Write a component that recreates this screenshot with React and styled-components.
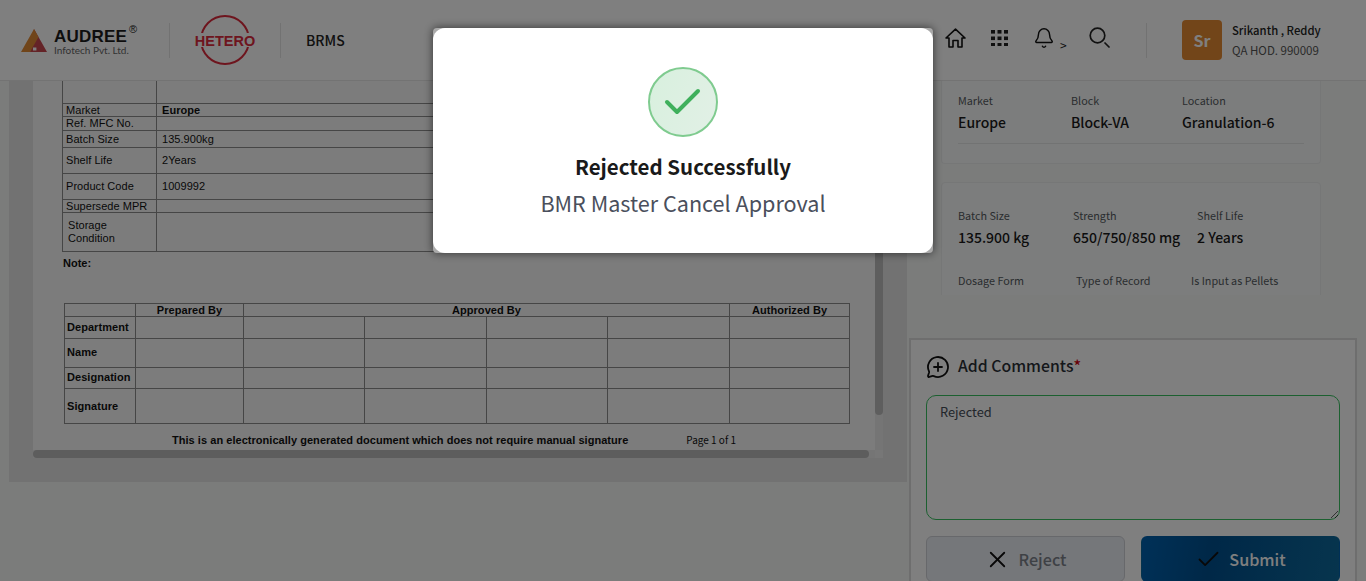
import React from 'react';
import styled, { createGlobalStyle } from 'styled-components';
import { Bell, Check, MessageCirclePlus, X } from 'lucide-react';

const UI_FONT = '"Noto Sans CJK SC", "Noto Sans", sans-serif';
const DOC_FONT = '"Liberation Sans", Arial, sans-serif';

const GlobalStyle = createGlobalStyle`
  html, body {
    margin: 0;
    height: 100%;
    overflow: hidden;
    background: #f6f8f7;
    font-family: ${UI_FONT};
  }
  * { box-sizing: border-box; }
`;

const Page = styled.div`
  width: 1366px;
  height: 581px;
  overflow: hidden;
`;

/* header */
const Header = styled.header`
  height: 81px;
  display: flex;
  align-items: center;
  background: #fff;
  border-bottom: 1px solid #e6e6e6;
`;

const LogoBlock = styled.div`
  display: flex;
  align-items: center;
  gap: 7px;
  width: 148px;
  margin-left: 21px;
`;

const LogoText = styled.div`
  display: flex;
  flex-direction: column;
  width: 90px;
`;

const LogoName = styled.div`
  font: bold 17px/16px ${DOC_FONT};
  letter-spacing: 0.2px;
  color: #1c1c1c;
  white-space: nowrap;
  sup {
    font: 400 11px/11px ${DOC_FONT};
    vertical-align: 9px;
    margin-left: 2px;
  }
`;

const LogoSub = styled.div`
  font: 400 10px/11px Lato, sans-serif;
  color: #666;
  white-space: nowrap;
`;

const Divider = styled.div`
  width: 1px;
  height: 35px;
  background: #e4e4e4;
`;

const HeteroWrap = styled.div`
  width: 110px;
  display: flex;
  justify-content: center;
  svg { display: block; }
`;

const AppName = styled.div`
  margin-left: 25px;
  font: 500 14px/20px ${UI_FONT};
  color: #222;
`;

const HeaderRight = styled.div`
  margin-left: auto;
  display: flex;
  align-items: center;
  height: 100%;
`;

const IconSlot = styled.div`
  display: flex;
  align-items: center;
  color: #111;
  width: ${(p) => p.$w}px;
  margin-top: ${(p) => p.$mt ?? -4}px;
`;

const Chevron = styled.span`
  font: 400 12px/12px ${UI_FONT};
  color: #222;
  margin: 14px 0 0 5px;
`;

const Avatar = styled.div`
  width: 40px;
  height: 40px;
  margin: 0 10px 0 35px;
  display: flex;
  align-items: center;
  justify-content: center;
  border-radius: 4px;
  background: #e58a33;
  color: #fff;
  font: 700 16px/20px ${UI_FONT};
`;

const UserInfo = styled.div`
  width: 134px;
  display: flex;
  flex-direction: column;
  gap: 4px;
`;

const UserName = styled.div`
  font: 500 11.3px/16px ${UI_FONT};
  color: #222;
`;

const UserRole = styled.div`
  font: 400 11.5px/16px ${UI_FONT};
  color: #555;
`;

/* body */
const Body = styled.main`
  display: flex;
  gap: 2px;
  padding-left: 9px;
`;

const DocFrame = styled.section`
  width: 898px;
  height: 401px;
  padding: 0 24px 24px;
  background: #e4e4e4;
`;

const Scroller = styled.div`
  display: grid;
  grid-template-columns: 842px 8px;
  grid-template-rows: 369px 8px;
`;

const Doc = styled.div`
  overflow: hidden;
  background: #f9f9f9;
  padding-left: 29px;
  font-family: ${DOC_FONT};
  color: #111;
`;

const Track = styled.div`
  background: #eaeaea;
`;

const VThumb = styled.div`
  width: 8px;
  height: 334px;
  border-radius: 0 0 4px 4px;
  background: #bdbdbd;
`;

const HThumb = styled.div`
  width: 836px;
  height: 8px;
  border-radius: 4px;
  background: #bababa;
`;

const Corner = styled.div`
  background: #efefef;
`;

const Table = styled.table`
  border-collapse: collapse;
  table-layout: fixed;
  width: ${(p) => p.$w}px;
  margin-left: ${(p) => p.$ml || 0}px;
  margin-top: ${(p) => p.$mt || 0}px;
  font-size: 11px;
  line-height: 12px;
`;

const Row = styled.tr`
  height: ${(p) => p.$h}px;
`;

const Cell = styled.td`
  border: 1px solid #8c8c8c;
  padding: 0 0 ${(p) => p.$pb || 0}px ${(p) => (p.$center ? 0 : p.$pl ?? 3)}px;
  font-weight: ${(p) => (p.$bold ? 700 : 400)};
  letter-spacing: 0.05px;
  line-height: ${(p) => (p.$wrap ? 13 : 12)}px;
  text-align: ${(p) => (p.$center ? 'center' : 'left')};
  white-space: ${(p) => (p.$wrap ? 'normal' : 'nowrap')};
`;

const TopCell = styled(Cell)`
  border-top: none;
`;

const Note = styled.div`
  margin: 5px 0 0 1px;
  height: 12px;
  font-size: 11px;
  line-height: 12px;
  font-weight: 700;
`;

const DocFooter = styled.div`
  display: flex;
  align-items: center;
  margin: 9px 0 0 110px;
  height: 14px;
`;

const FooterText = styled.span`
  font-size: 11px;
  font-weight: 700;
  letter-spacing: 0.04px;
  white-space: nowrap;
`;

const PageNo = styled.span`
  margin-left: 58px;
  font: 400 10px/12px ${UI_FONT};
  white-space: nowrap;
`;

/* right column */
const RightCol = styled.aside`
  width: 448px;
  display: flex;
  flex-direction: column;
`;

const InfoArea = styled.div`
  height: 214px;
  overflow: hidden;
  padding: 0 36px 0 32px;
  display: flex;
  flex-direction: column;
  gap: 18px;
`;

const InfoCard = styled.div`
  flex: none;
  width: 380px;
  height: ${(p) => p.$h}px;
  background: #f9fafa;
  border: 1px solid #eceeee;
  border-radius: 4px;
  padding: ${(p) => p.$pad};
  ${(p) => p.$clipTop && 'border-top: none; border-radius: 0 0 4px 4px;'}
`;

const InfoRow = styled.div`
  display: flex;
  margin-top: ${(p) => p.$mt || 0}px;
`;

const InfoItem = styled.div`
  width: ${(p) => p.$w}px;
  flex: none;
`;

const InfoLabel = styled.div`
  font: 400 10.8px/16px ${UI_FONT};
  color: #555b60;
  white-space: nowrap;
`;

const InfoValue = styled.div`
  margin-top: 3px;
  font: 500 14px/22px ${UI_FONT};
  color: #1b1b1b;
  white-space: nowrap;
`;

const InfoRule = styled.div`
  height: 1px;
  margin-top: 10px;
  background: #e4e6e6;
`;

const Panel = styled.section`
  margin-top: 43px;
  width: 448px;
  height: 260px;
  padding: 13px 15px 0;
  background: #fff;
  border: 2px solid #dcdcdc;
  border-bottom: none;
`;

const PanelTitle = styled.div`
  display: flex;
  align-items: center;
  gap: 8px;
  height: 25px;
  font: 500 15.8px/24px ${UI_FONT};
  color: #2a2f36;
  svg { color: #111; margin-top: 2px; }
`;

const Required = styled.span`
  color: #d0000f;
  margin-left: -8px;
`;

const CommentBox = styled.textarea`
  display: block;
  width: 414px;
  height: 125px;
  margin-top: 17px;
  padding: 6px 13px;
  border: 1px solid #38c060;
  border-radius: 10px;
  outline: none;
  background: #fff;
  font: 400 12.8px/20px ${UI_FONT};
  color: #444c56;
`;

const ButtonRow = styled.div`
  display: flex;
  gap: 16px;
  margin-top: 16px;
`;

const ActionButton = styled.button`
  width: 199px;
  height: 46px;
  display: flex;
  align-items: center;
  justify-content: center;
  gap: 7px;
  border-radius: 6px;
  font: 500 16.2px/24px ${UI_FONT};
  color: ${(p) => (p.$primary ? '#fff' : '#7d828b')};
  border: 1px solid ${(p) => (p.$primary ? 'transparent' : '#cfd1d6')};
  background: ${(p) =>
    p.$primary
      ? 'linear-gradient(100deg, #0062b0 0%, #00508f 35%, #0e6a9c 100%)'
      : '#ebeef5'};
  svg { color: #111; }
`;

/* modal */
const Overlay = styled.div`
  position: fixed;
  inset: 0;
  display: flex;
  justify-content: center;
  align-items: flex-start;
  padding-top: 28px;
  background: rgba(0, 0, 0, 0.5);
`;

const ModalShell = styled.div`
  width: 500px;
  height: 225px;
  background: #aaa;
  border-radius: 4px;
  box-shadow: 0 0 10px rgba(0, 0, 0, 0.6);
`;

const Modal = styled.div`
  height: 100%;
  padding-top: 39px;
  display: flex;
  flex-direction: column;
  align-items: center;
  background: #fff;
  border-radius: 12px;
`;

const SuccessCircle = styled.div`
  width: 70px;
  height: 70px;
  display: flex;
  align-items: center;
  justify-content: center;
  border-radius: 50%;
  border: 2px solid #7fcb8f;
  background: linear-gradient(110deg, #d8f0de, #e2f0e6);
`;

const ModalTitle = styled.div`
  margin-top: 13px;
  font: 700 20.5px/32px ${UI_FONT};
  color: #1a1a1a;
`;

const ModalText = styled.div`
  margin-top: 5px;
  font: 400 21.6px/32px ${UI_FONT};
  color: #4a4f5c;
`;

const topRows = [
  { h: 22, label: '', value: '' },
  { h: 13, label: 'Market', value: 'Europe', bold: true },
  { h: 14, label: 'Ref. MFC No.', value: '' },
  { h: 17, label: 'Batch Size', value: '135.900kg' },
  { h: 26, label: 'Shelf Life', value: '2Years' },
  { h: 26, label: 'Product Code', value: '1009992' },
  { h: 13, label: 'Supersede MPR', value: '' },
  { h: 39, label: 'Storage Condition', value: '', wrap: true },
];

const signRows = [
  { h: 22, label: 'Department' },
  { h: 29, label: 'Name', pb: 2 },
  { h: 21, label: 'Designation', pb: 2 },
  { h: 35, label: 'Signature' },
];

const lotInfo = [
  { w: 113, label: 'Market', value: 'Europe' },
  { w: 111, label: 'Block', value: 'Block-VA' },
  { w: 120, label: 'Location', value: 'Granulation-6' },
];

const batchInfo = [
  { w: 115, label: 'Batch Size', value: '135.900 kg' },
  { w: 124, label: 'Strength', value: '650/750/850 mg' },
  { w: 100, label: 'Shelf Life', value: '2 Years' },
];

const formInfo = [
  { w: 118, label: 'Dosage Form' },
  { w: 115, label: 'Type of Record' },
  { w: 120, label: 'Is Input as Pellets' },
];

const AudreeMark = () => (
  <svg width="26" height="23" viewBox="0 0 26 23">
    <path d="M13 0 L26 23 H9 Z" fill="#c9464e" />
    <path d="M0 23 L13 0 L17.5 8 L9 23 Z" fill="#e08a35" />
    <rect x="12" y="18.5" width="3.4" height="3" fill="#fff" />
  </svg>
);

const HeteroMark = () => (
  <svg width="64" height="52" viewBox="0 0 64 52">
    <circle cx="32" cy="26" r="24" fill="none" stroke="#dc2a3c" strokeWidth="2" />
    <rect x="0" y="19" width="64" height="14" fill="#fff" />
    <text
      x="32"
      y="31.5"
      textAnchor="middle"
      fontFamily={DOC_FONT}
      fontWeight="700"
      fontSize="14.5"
      fill="#dc2a3c"
    >
      HETERO
    </text>
  </svg>
);

const HomeIcon = () => (
  <svg width="21" height="20" viewBox="0 0 21 20" fill="none" stroke="currentColor" strokeWidth="1.6" strokeLinejoin="round">
    <path d="M1 10 L10.5 1.2 L20 10 H17 V19 H13 V12.5 H8 V19 H4 V10 Z" />
  </svg>
);

const GridIcon = () => (
  <svg width="17" height="16" viewBox="0 0 17 16" fill="#222">
    {[0, 6.5, 13].map((y) =>
      [0, 6.5, 13].map((x) => <rect key={`${x}-${y}`} x={x} y={y} width="4" height="3.6" />)
    )}
  </svg>
);

const SearchIcon = () => (
  <svg width="21" height="21" viewBox="0 0 21 21" fill="none" stroke="#222" strokeWidth="1.7" strokeLinecap="round">
    <circle cx="8.5" cy="8.5" r="7.3" />
    <path d="M16 16 L20 20" />
  </svg>
);

const App = () => (
  <>
    <GlobalStyle />
    <Page>
      <Header>
        <LogoBlock>
          <AudreeMark />
          <LogoText>
            <LogoName>
              AUDREE<sup>®</sup>
            </LogoName>
            <LogoSub>Infotech Pvt. Ltd.</LogoSub>
          </LogoText>
        </LogoBlock>
        <Divider />
        <HeteroWrap>
          <HeteroMark />
        </HeteroWrap>
        <Divider />
        <AppName>BRMS</AppName>
        <HeaderRight>
          <IconSlot $w={46}>
            <HomeIcon />
          </IconSlot>
          <IconSlot $w={42}>
            <GridIcon />
          </IconSlot>
          <IconSlot $w={56}>
            <Bell size={22} strokeWidth={1.6} />
            <Chevron>&gt;</Chevron>
          </IconSlot>
          <IconSlot $w={57} $mt={-6}>
            <SearchIcon />
          </IconSlot>
          <Divider />
          <Avatar>Sr</Avatar>
          <UserInfo>
            <UserName>Srikanth , Reddy</UserName>
            <UserRole>QA HOD. 990009</UserRole>
          </UserInfo>
        </HeaderRight>
      </Header>

      <Body>
        <DocFrame>
          <Scroller>
            <Doc>
              <Table $w={788}>
                <colgroup>
                  <col width="94" />
                  <col />
                </colgroup>
                <tbody>
                  {topRows.map((row, i) => {
                    const LabelCell = i === 0 ? TopCell : Cell;
                    return (
                      <Row key={row.label || i} $h={row.h}>
                        <LabelCell $wrap={row.wrap} $pl={row.wrap ? 5 : 3}>
                          {row.label}
                        </LabelCell>
                        <LabelCell $bold={row.bold} $pl={5}>
                          {row.value}
                        </LabelCell>
                      </Row>
                    );
                  })}
                </tbody>
              </Table>
              <Note>Note:</Note>
              <Table $w={785} $ml={2} $mt={34}>
                <colgroup>
                  <col width="71" />
                  <col width="108" />
                  <col width="121" />
                  <col width="122" />
                  <col width="121" />
                  <col width="122" />
                  <col width="120" />
                </colgroup>
                <tbody>
                  <Row $h={13}>
                    <Cell />
                    <Cell $bold $center>Prepared By</Cell>
                    <Cell $bold $center colSpan={4}>Approved By</Cell>
                    <Cell $bold $center>Authorized By</Cell>
                  </Row>
                  {signRows.map((row) => (
                    <Row key={row.label} $h={row.h}>
                      <Cell $bold $pl={2} $pb={row.pb}>{row.label}</Cell>
                      <Cell />
                      <Cell />
                      <Cell />
                      <Cell />
                      <Cell />
                      <Cell />
                    </Row>
                  ))}
                </tbody>
              </Table>
              <DocFooter>
                <FooterText>
                  This is an electronically generated document which does not require manual signature
                </FooterText>
                <PageNo>Page 1 of 1</PageNo>
              </DocFooter>
            </Doc>
            <Track>
              <VThumb />
            </Track>
            <Track>
              <HThumb />
            </Track>
            <Corner />
          </Scroller>
        </DocFrame>

        <RightCol>
          <InfoArea>
            <InfoCard $clipTop $h={83} $pad="11px 16px 0">
              <InfoRow>
                {lotInfo.map((item) => (
                  <InfoItem key={item.label} $w={item.w}>
                    <InfoLabel>{item.label}</InfoLabel>
                    <InfoValue>{item.value}</InfoValue>
                  </InfoItem>
                ))}
              </InfoRow>
              <InfoRule />
            </InfoCard>
            <InfoCard $h={200} $pad="24px 16px 0">
              <InfoRow>
                {batchInfo.map((item) => (
                  <InfoItem key={item.label} $w={item.w}>
                    <InfoLabel>{item.label}</InfoLabel>
                    <InfoValue>{item.value}</InfoValue>
                  </InfoItem>
                ))}
              </InfoRow>
              <InfoRow $mt={24}>
                {formInfo.map((item) => (
                  <InfoItem key={item.label} $w={item.w}>
                    <InfoLabel>{item.label}</InfoLabel>
                  </InfoItem>
                ))}
              </InfoRow>
            </InfoCard>
          </InfoArea>

          <Panel>
            <PanelTitle>
              <MessageCirclePlus size={24} strokeWidth={1.8} />
              Add Comments
              <Required>*</Required>
            </PanelTitle>
            <CommentBox defaultValue="Rejected" readOnly />
            <ButtonRow>
              <ActionButton>
                <X size={27} strokeWidth={1.6} />
                Reject
              </ActionButton>
              <ActionButton $primary>
                <Check size={27} strokeWidth={1.6} />
                Submit
              </ActionButton>
            </ButtonRow>
          </Panel>
        </RightCol>
      </Body>
    </Page>

    <Overlay>
      <ModalShell>
        <Modal>
          <SuccessCircle>
            <svg width="40" height="32" viewBox="0 0 40 32" fill="none" stroke="#3fb05c" strokeWidth="4" strokeLinecap="round" strokeLinejoin="round">
              <path d="M4 16 L14 26 L35 5" />
            </svg>
          </SuccessCircle>
          <ModalTitle>Rejected Successfully</ModalTitle>
          <ModalText>BMR Master Cancel Approval</ModalText>
        </Modal>
      </ModalShell>
    </Overlay>
  </>
);

export default App;
